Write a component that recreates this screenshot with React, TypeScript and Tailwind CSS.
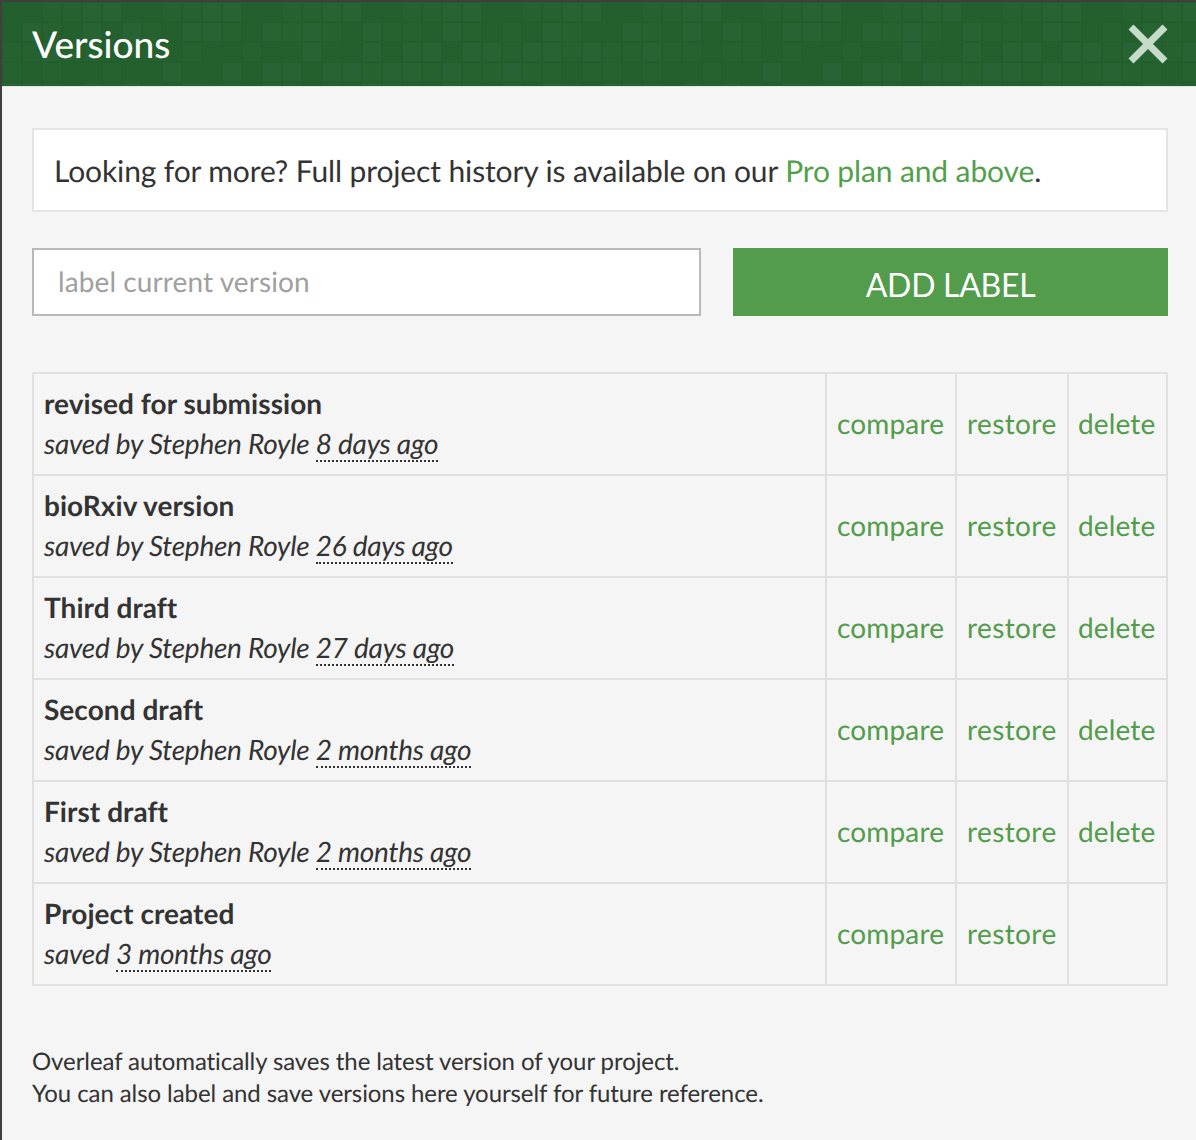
import React from 'react'

const rows = [
  { title: 'revised for submission', by: 'saved by Stephen Royle', when: '8 days ago', del: true },
  { title: 'bioRxiv version', by: 'saved by Stephen Royle', when: '26 days ago', del: true },
  { title: 'Third draft', by: 'saved by Stephen Royle', when: '27 days ago', del: true },
  { title: 'Second draft', by: 'saved by Stephen Royle', when: '2 months ago', del: true },
  { title: 'First draft', by: 'saved by Stephen Royle', when: '2 months ago', del: true },
  { title: 'Project created', by: 'saved', when: '3 months ago', del: false },
]

// header texture: faint squares on a 20px grid
const HeaderPattern = () => {
  const cells = []
  for (let y = 0; y < 5; y++) {
    for (let x = 0; x < 61; x++) {
      const n = (x * 7 + y * 13 + ((x * y) % 5) * 3) % 6
      cells.push(<rect key={`${x}-${y}`} x={x * 20 + 1} y={y * 20 + 1} width={18} height={18} fill="#ffffff" fillOpacity={n > 3 ? 0.035 : n > 1 ? 0.025 : 0.012} />)
    }
  }
  return (
    <svg className="absolute inset-0 w-full h-full" aria-hidden="true">
      {cells}
    </svg>
  )
}

const App = () => {
  return (
    <div className="w-[1196px] h-[1140px] bg-[#3f3f3f] pt-[2px] pl-[2px] overflow-hidden font-['Lato','Open_Sans',sans-serif] text-[#333333] [text-rendering:geometricPrecision] [font-variant-ligatures:none]">
      <div className="h-full bg-[#f5f5f5]">
        <div className="relative h-[85px] bg-[#215f2c] border-b border-[#e5e5e5] flex items-center justify-between pl-[30px] pr-[28px] overflow-hidden">
          <HeaderPattern />
          <h1 className="relative -mt-[2px] text-[37px] font-medium text-white leading-none">Versions</h1>
          <svg className="relative" width="40" height="40" viewBox="0 0 40 40" aria-hidden="true">
            <path d="M3 3 L37 37 M37 3 L3 37" stroke="#c4dcc8" strokeWidth="7" />
          </svg>
        </div>

        <div className="pl-[30px] pr-[28px] pt-[41px]">
          <div className="h-[84px] pt-[2px] bg-white border-2 border-[#e5e5e5] flex items-center px-5 text-[30px] tracking-[-0.125px]">
            <span>Looking for more? Full project history is available on our <span className="text-[#529f4c]">Pro plan and above</span>.</span>
          </div>

          <div className="flex gap-8 mt-[36px]">
            <div className="w-[669px] h-[68px] pb-[2px] bg-white border-2 border-[#b9b9b9] flex items-center px-6 text-[28px] tracking-[0.1px] text-[#a0a0a0]">label current version</div>
            <button className="flex-1 h-[68px] pt-[5px] bg-[#529c4c] text-white text-[32px] tracking-[-0.3px]">ADD LABEL</button>
          </div>

          <table className="w-[1136px] mt-[56px] border-collapse table-fixed text-[28px]">
            <tbody>
              {rows.map((r) => (
                <tr key={r.title} className="h-[102px]">
                  <td className="border-2 border-[#e0e0e0] pl-[10px] pb-[2px] align-middle">
                    <div className="font-bold leading-[40px] tracking-[0.05px]">{r.title}</div>
                    <div className="italic leading-[40px] tracking-[-0.25px]">
                      {r.by} <span className="border-b-2 border-dotted border-[#333333]">{r.when}</span>
                    </div>
                  </td>
                  <td className="w-[130px] border-2 border-[#e0e0e0] pl-[10px] pb-[2px] text-[#529c4c] tracking-[0.15px]">compare</td>
                  <td className="w-[112px] border-2 border-[#e0e0e0] pl-[10px] pb-[2px] text-[#529c4c] tracking-[0.4px]">restore</td>
                  <td className="w-[99px] border-2 border-[#e0e0e0] pl-[9px] pb-[2px] text-[#529c4c] tracking-[0.15px]">{r.del ? 'delete' : ''}</td>
                </tr>
              ))}
            </tbody>
          </table>

          <p className="mt-[60px] text-[24px] leading-[32px] tracking-[-0.08px]">
            Overleaf automatically saves the latest version of your project.<br />
            You can also label and save versions here yourself for future reference.
          </p>
        </div>
      </div>
    </div>
  )
}

export default App
